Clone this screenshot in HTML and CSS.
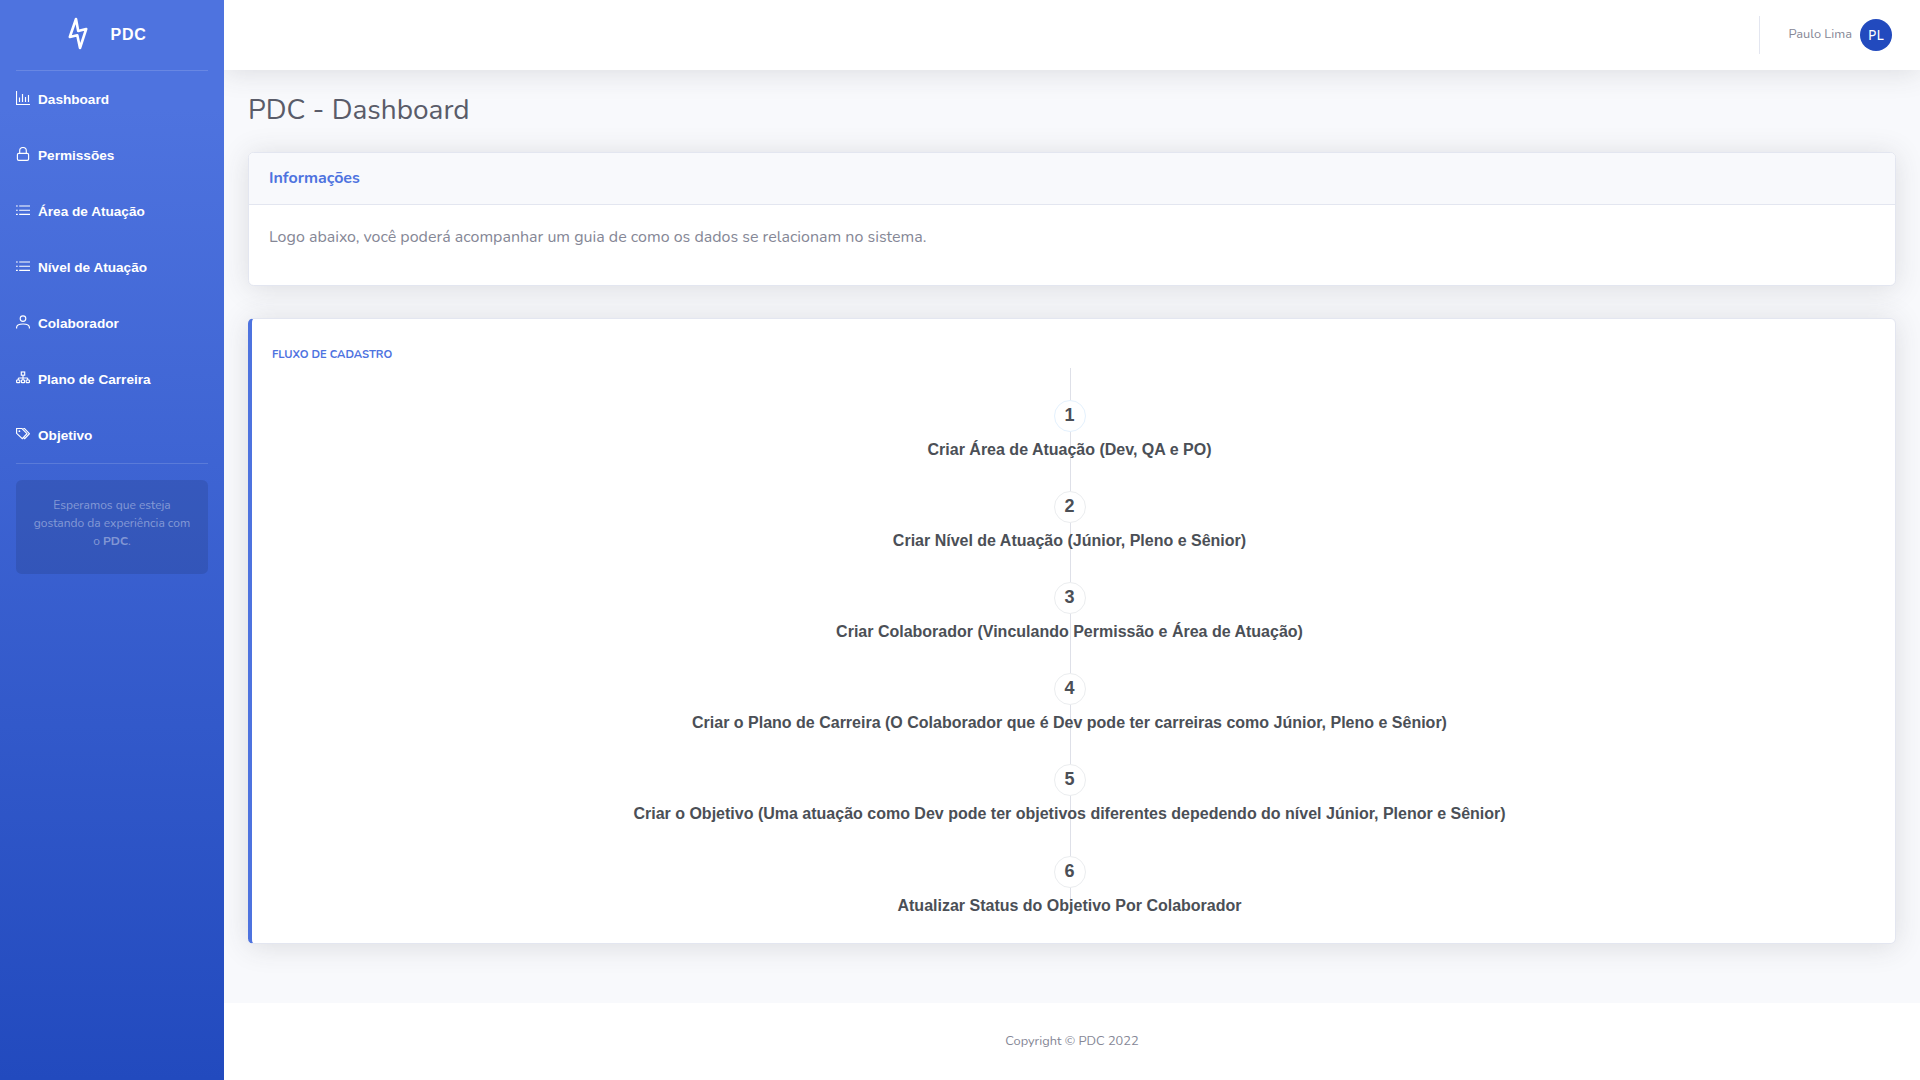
FILE: index.html
```html
<!DOCTYPE html>
<html lang="pt-BR">
<head>
<meta charset="utf-8">
<title>PDC - Dashboard</title>
<link rel="stylesheet" href="styles.css">
</head>
<body>
<div class="wrapper">
  <aside class="sidebar">
    <a class="brand">
      <svg class="brand-icon" viewBox="0 0 20 34"><path d="M8 2 1.8 20 9.3 18.2 12 31 18.2 12 10.2 14Z"/></svg>
      <span class="brand-text">PDC</span>
    </a>
    <hr class="side-divider">
    <nav class="nav">
      <a class="nav-item"><svg viewBox="0 0 14 14"><path d="M.5 0v13.5H14M3.5 6.5V11M6.5 3V11M9.5 6V11M12.5 4V11"/></svg><span>Dashboard</span></a>
      <a class="nav-item"><svg viewBox="0 0 14 14"><rect x="1.4" y="6.4" width="11.2" height="7" rx="1.4"/><path d="M3.7 6.4V3.8a3.3 3.3 0 0 1 6.6 0V6.4"/></svg><span>Permissões</span></a>
      <a class="nav-item"><svg viewBox="0 0 14 14"><path d="M3.2 3H14M3.2 7.2H14M3.2 11.4H14M0 3H1.8M0 7.2H1.8M0 11.4H1.8"/></svg><span>Área de Atuação</span></a>
      <a class="nav-item"><svg viewBox="0 0 14 14"><path d="M3.2 3H14M3.2 7.2H14M3.2 11.4H14M0 3H1.8M0 7.2H1.8M0 11.4H1.8"/></svg><span>Nível de Atuação</span></a>
      <a class="nav-item"><svg viewBox="0 0 14 14"><circle cx="7" cy="3.6" r="2.8"/><path d="M.6 13.4V12.6C.6 10.3 3.2 9 7 9s6.4 1.3 6.4 3.6v.8"/></svg><span>Colaborador</span></a>
      <a class="nav-item"><svg viewBox="0 0 14 14"><rect x="5.3" y="1" width="3.4" height="3.2"/><path d="M7 4.2V9M2.2 9V7.9Q2.2 7 3.1 7h7.8q.9 0 .9.9V9"/><rect x=".6" y="9" width="3.2" height="2.6" rx=".6"/><rect x="5.4" y="9" width="3.2" height="2.6" rx=".6"/><rect x="10.2" y="9" width="3.2" height="2.6" rx=".6"/></svg><span>Plano de Carreira</span></a>
      <a class="nav-item"><svg viewBox="0 0 14 14"><path d="M.6 1.5H6L11 6.7 6.3 11.6.6 6.3ZM7.3 1.5h1.2l4.9 5.2-4.7 4.9-1-.8"/><circle class="dot" cx="3.4" cy="4.2" r=".9"/></svg><span>Objetivo</span></a>
    </nav>
    <hr class="side-divider">
    <div class="side-card">
      <div>Esperamos que esteja</div>
      <div>gostando da experiência com</div>
      <div>o <strong>PDC</strong>.</div>
    </div>
  </aside>
  <div class="content">
    <header class="topbar">
      <span class="topbar-divider"></span>
      <span class="user-name">Paulo Lima</span>
      <span class="avatar">PL</span>
    </header>
    <main class="main">
      <h1 class="page-title">PDC - Dashboard</h1>
      <section class="card info">
        <div class="card-header"><h6 class="card-title">Informações</h6></div>
        <div class="card-body"><p class="info-text">Logo abaixo, você poderá acompanhar um guia de como os dados se relacionam no sistema.</p></div>
      </section>
      <section class="card flow">
        <div class="flow-title">Fluxo de Cadastro</div>
        <ol class="steps">
          <li class="step active"><span class="num">1</span><span class="label">Criar Área de Atuação (Dev, QA e PO)</span></li>
          <li class="step"><span class="num">2</span><span class="label">Criar Nível de Atuação (Júnior, Pleno e Sênior)</span></li>
          <li class="step"><span class="num">3</span><span class="label">Criar Colaborador (Vinculando Permissão e Área de Atuação)</span></li>
          <li class="step"><span class="num">4</span><span class="label">Criar o Plano de Carreira (O Colaborador que é Dev pode ter carreiras como Júnior, Pleno e Sênior)</span></li>
          <li class="step"><span class="num">5</span><span class="label">Criar o Objetivo (Uma atuação como Dev pode ter objetivos diferentes depedendo do nível Júnior, Plenor e Sênior)</span></li>
          <li class="step"><span class="num">6</span><span class="label">Atualizar Status do Objetivo Por Colaborador</span></li>
        </ol>
      </section>
    </main>
    <footer class="footer"><span class="copy">Copyright © PDC 2022</span></footer>
  </div>
</div>
</body>
</html>
```

FILE: styles.css
```css
* { box-sizing: border-box; }
body {
  margin: 0;
  font-family: Nunito, Lato, "Noto Sans", sans-serif;
  font-size: 16px;
  line-height: 1.5;
  color: #858796;
  background: #fff;
}
.wrapper { display: flex; height: 1080px; overflow: hidden; }

.sidebar {
  width: 224px;
  flex: none;
  z-index: 1;
  background: linear-gradient(180deg, #4e73df 10%, #224abe 100%);
  color: #fff;
  font-family: "Liberation Sans", Arial, sans-serif;
}
.brand { display: flex; align-items: center; height: 70px; padding: 0 0 3px 67.5px; }
.brand-icon { width: 20px; height: 34px; }
.brand-icon path { fill: none; stroke: #fff; stroke-width: 2.6; stroke-linejoin: round; }
.brand-text { margin: 2px 0 0 23px; font-size: 16px; font-weight: bold; letter-spacing: .8px; }
.side-divider { margin: 0 16px; border: 0; border-top: 1px solid rgba(255, 255, 255, .15); }
.nav-item { display: flex; gap: 8px; height: 56px; padding: 20px 16px 0; font-size: 13.6px; font-weight: bold; line-height: 18px; }
.nav-item svg { width: 14px; height: 14px; }
.nav-item path, .nav-item rect, .nav-item circle { fill: none; stroke: #fff; stroke-width: 1.15; }
.nav-item .dot { fill: #fff; stroke: none; }
.side-card {
  margin: 16px 16px 0;
  height: 94px;
  padding: 16px 0;
  border-radius: 5.6px;
  background: rgba(0, 0, 0, .1);
  color: rgba(255, 255, 255, .4);
  font-family: Nunito, Lato, "Noto Sans", sans-serif;
  font-size: 12px;
  line-height: 18px;
  text-align: center;
  white-space: nowrap;
}

.content { flex: 1; display: flex; flex-direction: column; background: #f8f9fc; }
.topbar {
  display: flex;
  align-items: center;
  justify-content: flex-end;
  flex: none;
  height: 70px;
  padding-right: 28px;
  background: #fff;
  box-shadow: 0 2.4px 28px rgba(58, 59, 69, .15);
}
.topbar-divider { width: 1px; height: 38px; margin-right: 28px; background: #e3e6f0; }
.user-name { margin: -1px 8px 0 0; font-size: 12.8px; }
.avatar { width: 32px; height: 32px; border-radius: 50%; background: #224abe; color: #fff; font-family: "Noto Sans", sans-serif; font-size: 14px; line-height: 31px; text-align: center; }

.main { flex: 1; padding: 23px 24px 0; }
.page-title { margin: 0 0 25px; font-size: 28px; font-weight: 400; line-height: 34px; color: #5a5c69; }
.card { background: #fff; border: 1px solid #e3e6f0; border-radius: 5.6px; box-shadow: 0 2.4px 28px rgba(58, 59, 69, .15); }
.info { height: 134px; overflow: hidden; }
.card-header { height: 52px; padding: 13px 20px 0; background: #f8f9fc; border-bottom: 1px solid #e3e6f0; }
.card-title { margin: 0; font-size: 16px; font-weight: 700; line-height: 25px; color: #4e73df; }
.card-body { padding: 20px; }
.info-text { margin: 0; }
.flow { height: 626px; margin-top: 32px; padding: 26px 0 0 20px; border-left: 4px solid #4e73df; }
.flow-title { height: 22.6px; font-size: 11.2px; font-weight: 700; line-height: 20px; text-transform: uppercase; color: #4e73df; }
.steps {
  margin: 0 28px 0 0;
  padding: 0;
  height: 545px;
  list-style: none;
  font-family: "Liberation Sans", Arial, sans-serif;
  font-weight: bold;
  color: #4b4f56;
  background: linear-gradient(#dee0e8, #dee0e8) calc(50% + 1px) 0 / 1px 100% no-repeat;
}
.step { display: flex; flex-direction: column; align-items: center; height: 91.2px; padding-top: 32px; }
.num { flex: none; width: 32px; height: 32px; border: 1px solid #ebedef; border-radius: 50%; background: #fff; font-size: 18px; line-height: 29px; text-align: center; }
.active .num { border-color: #e4f1fd; }
.label { margin-top: 6px; line-height: 24px; white-space: nowrap; }
.footer { flex: none; height: 77px; padding-top: 29px; background: #fff; font-size: 12.8px; line-height: 18px; text-align: center; }
```
